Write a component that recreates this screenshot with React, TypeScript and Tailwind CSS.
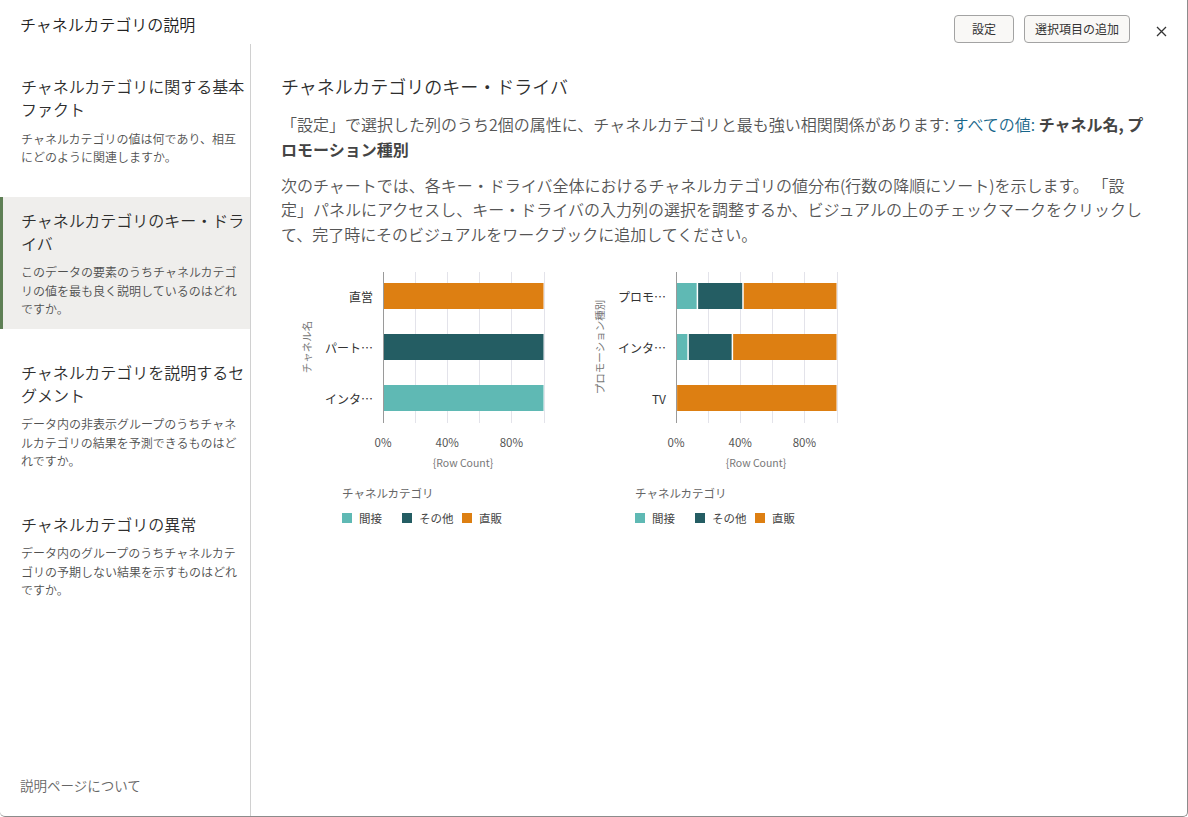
import React from "react";

const FONT = '"Noto Sans CJK JP", "Noto Sans", "Liberation Sans", sans-serif';

const TEAL = "#5fb9b4";
const DARK = "#245d63";
const ORANGE = "#dd7f12";

type Seg = { v: number; c: string };
type Row = { label: string; segs: Seg[] };

function Chart({ axisX, yTitle, rows }: { axisX: number; yTitle: string; rows: Row[] }) {
  const W = 160.5;
  const barY = [21, 72, 123];
  const lx = axisX - 41;
  const ax = Math.round(axisX) + 0.5;
  return (
    <svg width={290} height={270} className="block shrink-0 font-normal" style={{ fontFamily: FONT }}>
      {[1, 2, 3, 4, 5].map((k) => {
        const x = Math.round(axisX + (k * W) / 5) + 0.5;
        return <line key={k} x1={x} x2={x} y1={10} y2={161} stroke="#e3e3ea" strokeWidth={1} />;
      })}
      {rows.map((r, i) => {
        let x = axisX;
        return (
          <g key={i}>
            {r.segs.map((s, j) => {
              const w = (s.v / 100) * W;
              const last = j === r.segs.length - 1;
              const el = (
                <rect key={j} x={x} y={barY[i]} width={Math.max(0, w - (last ? 0 : 1.5))} height={26} fill={s.c} />
              );
              x += w;
              return el;
            })}
            <text x={axisX - 10} y={barY[i] + 13} textAnchor="end" dominantBaseline="central" fontSize={12} fill="#333">
              {r.label}
            </text>
          </g>
        );
      })}
      <line x1={ax} x2={ax} y1={10} y2={161} stroke="#9a9a9a" strokeWidth={1} />
      {[0, 2, 4].map((k) => (
        <text
          key={k}
          x={axisX + (k * W) / 5}
          y={180}
          textAnchor="middle"
          dominantBaseline="central"
          fontSize={11.5}
          fill="#555"
        >
          {k * 20}%
        </text>
      ))}
      <text x={axisX + 80} y={200} textAnchor="middle" dominantBaseline="central" fontSize={10.5} fill="#777">
        {"{Row Count}"}
      </text>
      <text
        x={axisX - 77}
        y={85}
        textAnchor="middle"
        dominantBaseline="central"
        fontSize={10.5}
        fill="#777"
        transform={`rotate(-90 ${axisX - 77} 85)`}
      >
        {yTitle}
      </text>
      <text x={lx} y={231} dominantBaseline="central" fontSize={11.5} fill="#666">
        チャネルカテゴリ
      </text>
      {[
        { c: TEAL, t: "間接", x: 0 },
        { c: DARK, t: "その他", x: 60 },
        { c: ORANGE, t: "直販", x: 120 },
      ].map((l) => (
        <g key={l.t}>
          <rect x={lx + l.x} y={251} width={10} height={10} fill={l.c} />
          <text x={lx + l.x + 17} y={256} dominantBaseline="central" fontSize={11.5} fill="#444">
            {l.t}
          </text>
        </g>
      ))}
    </svg>
  );
}

const items = [
  {
    title: "チャネルカテゴリに関する基本ファクト",
    desc: "チャネルカテゴリの値は何であり、相互にどのように関連しますか。",
    active: false,
  },
  {
    title: "チャネルカテゴリのキー・ドライバ",
    desc: "このデータの要素のうちチャネルカテゴリの値を最も良く説明しているのはどれですか。",
    active: true,
  },
  {
    title: "チャネルカテゴリを説明するセグメント",
    desc: "データ内の非表示グループのうちチャネルカテゴリの結果を予測できるものはどれですか。",
    active: false,
  },
  {
    title: "チャネルカテゴリの異常",
    desc: "データ内のグループのうちチャネルカテゴリの予期しない結果を示すものはどれですか。",
    active: false,
  },
];

export default function App() {
  return (
    <div
      className="w-[1188px] h-[817px] bg-white flex flex-col border-r border-b border-[#8c8c8c] rounded-b-[5px] overflow-hidden text-[#333] font-[350]"
      style={{ fontFamily: FONT }}
    >
      {/* Header */}
      <div className="h-[44px] shrink-0 flex items-start pl-[20px] pr-[19px]">
        <div className="mt-[13px] text-[16px] leading-[23px] text-[#222]">チャネルカテゴリの説明</div>
        <div className="flex-1" />
        <button className="mt-[15px] h-[28px] min-w-[60px] px-[10px] rounded-[4px] border border-[#a3a3a3] bg-[#f9f8f6] text-[12px] text-[#333] leading-none font-normal">
          設定
        </button>
        <button className="ml-[10px] mt-[15px] h-[28px] px-[10px] rounded-[4px] border border-[#a3a3a3] bg-[#f9f8f6] text-[12px] text-[#333] leading-none font-normal">
          選択項目の追加
        </button>
        <div className="ml-[24px] mt-[24px] w-[14px] h-[14px] flex items-center justify-center">
          <svg width="11" height="11" viewBox="0 0 11 11">
            <path d="M1 1 L10 10 M10 1 L1 10" stroke="#333" strokeWidth="1.3" fill="none" />
          </svg>
        </div>
      </div>

      <div className="flex flex-1 min-h-0">
        {/* Sidebar */}
        <div className="w-[251px] shrink-0 border-r border-[#d0d0d0] flex flex-col justify-between">
          <div className="pt-[19px] flex flex-col gap-[20px]">
            {items.map((it) => (
              <div
                key={it.title}
                className={
                  it.active
                    ? "bg-[#efeeec] border-l-[3px] border-[#5e7f55] pl-[18px] pr-[4px] pt-[12px] pb-[10px]"
                    : "pl-[21px] pr-[4px] pt-[12px] pb-[10px]"
                }
              >
                <div className="text-[16px] leading-[23px] text-[#2e2e2e]">{it.title}</div>
                <div className="mt-[8.5px] text-[12px] leading-[18.5px] text-[#505050]">{it.desc}</div>
              </div>
            ))}
          </div>
          <div className="pl-[20px] pb-[21px] text-[13.5px] leading-[20px] text-[#666]">説明ページについて</div>
        </div>

        {/* Main */}
        <div className="flex-1 min-w-0 pl-[30px] pr-[40px] pt-[30px]">
          <div className="text-[18px] leading-[25px] text-[#2e2e2e]">チャネルカテゴリのキー・ドライバ</div>
          <p className="mt-[12.5px] text-[16px] leading-[25px] text-[#555]">
            「設定」で選択した列のうち2個の属性に、チャネルカテゴリと最も強い相関関係があります:{" "}
            <span className="text-[#17668a]">すべての値:</span>{" "}
            <span className="font-bold text-[#444]">チャネル名, プロモーション種別</span>
          </p>
          <p className="mt-[11px] text-[16px] leading-[24.5px] text-[#555]">
            次のチャートでは、各キー・ドライバ全体におけるチャネルカテゴリの値分布(行数の降順にソート)を示します。
            「設定」パネルにアクセスし、キー・ドライバの入力列の選択を調整するか、ビジュアルの上のチェックマークをクリックして、完了時にそのビジュアルをワークブックに追加してください。
          </p>
          <div className="mt-[15.5px] ml-[9px] flex">
            <Chart
              axisX={93}
              yTitle="チャネル名"
              rows={[
                { label: "直営", segs: [{ v: 100, c: ORANGE }] },
                { label: "パート…", segs: [{ v: 100, c: DARK }] },
                { label: "インタ…", segs: [{ v: 100, c: TEAL }] },
              ]}
            />
            <Chart
              axisX={96}
              yTitle="プロモーション種別"
              rows={[
                {
                  label: "プロモ…",
                  segs: [
                    { v: 13.8, c: TEAL },
                    { v: 28.4, c: DARK },
                    { v: 57.8, c: ORANGE },
                  ],
                },
                {
                  label: "インタ…",
                  segs: [
                    { v: 8, c: TEAL },
                    { v: 27.6, c: DARK },
                    { v: 64.4, c: ORANGE },
                  ],
                },
                {
                  label: "TV",
                  segs: [
                    { v: 0.7, c: "#ffffff" },
                    { v: 99.3, c: ORANGE },
                  ],
                },
              ]}
            />
          </div>
        </div>
      </div>
    </div>
  );
}
